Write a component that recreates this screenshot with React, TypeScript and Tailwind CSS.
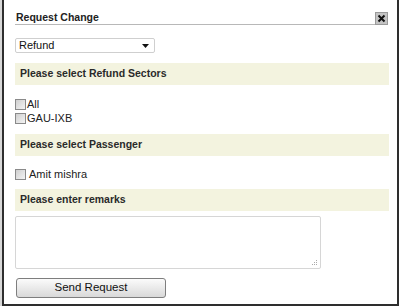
import React from "react";

const font = { fontFamily: '"Liberation Sans", Arial, sans-serif' };

function Check() {
  return (
    <span className="inline-block w-[11px] h-[11px] border border-[#8a8a8a] bg-gradient-to-br from-[#cfcfcf] to-[#f4f4f4] shrink-0" />
  );
}

function Header({ children }: { children: React.ReactNode }) {
  return (
    <div className="h-[22px] bg-[#f3f3df] flex items-center pl-[5px] text-[10.5px] font-bold text-[#2a2a2a]">
      {children}
    </div>
  );
}

export default function App() {
  return (
    <div className="w-[400px] h-[308px] bg-white overflow-hidden" style={font}>
      <div className="flex h-[306px]">
        <div className="w-[2px] bg-[#d8d8d8]" />
        <div className="w-[397px] h-[306px] border-l-2 border-r-2 border-b-2 border-[#2e2e2e] pl-[11px] pr-[8px] flex flex-col">
          <div className="mt-[10px] flex items-end">
            <div className="flex-1 h-[15px] border-b border-[#b8b8b8] text-[10.5px] font-bold text-[#222] leading-[14px] pl-[1px]">
              Request Change
            </div>
            <div className="w-[13px] h-[13px] bg-[#c4c4c4] border border-[#9a9a9a] flex items-center justify-center mr-[1px]">
              <svg width="9" height="9" viewBox="0 0 9 9">
                <path d="M1.5 1.5 L7.5 7.5 M7.5 1.5 L1.5 7.5" stroke="#111" strokeWidth="2" />
              </svg>
            </div>
          </div>
          <div className="mt-[13px] w-[140px] h-[15px] border border-[#cfcfcf] rounded-[2px] flex items-center justify-between pl-[3px] pr-[5px] text-[11px] text-[#111]">
            <span>Refund</span>
            <svg width="7" height="4" viewBox="0 0 7 4">
              <path d="M0 0 L7 0 L3.5 4 Z" fill="#111" />
            </svg>
          </div>
          <div className="mt-[10px]">
            <Header>Please select Refund Sectors</Header>
          </div>
          <div className="mt-[12px] flex flex-col text-[11px] text-[#222]">
            <label className="h-[14px] flex items-center">
              <Check />
              <span className="ml-[1px]">All</span>
            </label>
            <label className="h-[14px] flex items-center">
              <Check />
              <span className="ml-[1px]">GAU-IXB</span>
            </label>
          </div>
          <div className="mt-[9px]">
            <Header>Please select Passenger</Header>
          </div>
          <label className="mt-[10px] h-[16px] flex items-center text-[11px] text-[#222]">
            <Check />
            <span className="ml-[3px]">Amit mishra</span>
          </label>
          <div className="mt-[7px]">
            <Header>Please enter remarks</Header>
          </div>
          <div className="mt-[5px] w-[306px] h-[53px] border border-[#d6d6d6] rounded-[2px] relative">
            <svg className="absolute right-[2px] bottom-[2px]" width="6" height="6" viewBox="0 0 6 6">
              <rect x="4" y="0" width="1" height="1" fill="#aaa" />
              <rect x="2" y="2" width="1" height="1" fill="#aaa" />
              <rect x="4" y="2" width="1" height="1" fill="#aaa" />
              <rect x="0" y="4" width="1" height="1" fill="#aaa" />
              <rect x="2" y="4" width="1" height="1" fill="#aaa" />
              <rect x="4" y="4" width="1" height="1" fill="#aaa" />
            </svg>
          </div>
          <div className="mt-[9px] ml-[1px] w-[150px] h-[20px] border border-[#7e7e7e] rounded-[3px] bg-gradient-to-b from-[#fbfbfb] to-[#d9d9d9] flex items-center justify-center text-[11.5px] text-[#111]">
            Send Request
          </div>
        </div>
      </div>
    </div>
  );
}
